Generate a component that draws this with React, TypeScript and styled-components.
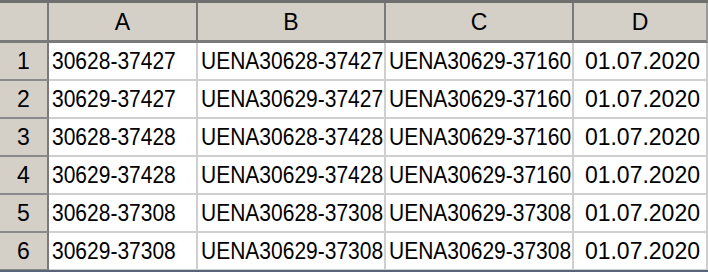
import React from "react";
import styled, { createGlobalStyle } from "styled-components";

const Global = createGlobalStyle`
  html, body { margin: 0; padding: 0; background: #ffffff; }
  body { width: 708px; height: 272px; overflow: hidden; }
`;

const Sheet = styled.div`
  width: 708px;
  height: 272px;
  box-sizing: border-box;
  border-top: 3px solid #6f6f6f;
  border-bottom: 2px solid #5a6478;
  display: grid;
  grid-template-columns: 49px 149px 188px 188px 134px;
  grid-template-rows: 40px repeat(6, 38px);
  font-family: "Liberation Sans", Arial, sans-serif;
  color: #000;
  overflow: hidden;
`;

const Corner = styled.div`
  background: #d4d0c8;
  border-right: 2px solid #7a7a7a;
  border-bottom: 3px solid #7a7a7a;
`;

const ColHead = styled.div<{ $last?: boolean }>`
  background: #d4d0c8;
  border-right: 2px solid ${(p) => (p.$last ? "#9a9a9a" : "#7a7a7a")};
  border-bottom: 3px solid #7a7a7a;
  display: flex;
  align-items: center;
  justify-content: center;
  font-size: 23px;
  padding-top: 2px;
`;

const RowHead = styled.div`
  background: #d4d0c8;
  border-right: 2px solid #7a7a7a;
  border-bottom: 2px solid #8a8a8a;
  display: flex;
  align-items: center;
  justify-content: center;
  font-size: 23px;
`;

const Cell = styled.div<{ $align: "left" | "right" }>`
  background: #ffffff;
  border-right: 2px solid #cfcfcf;
  border-bottom: 2px solid #cfcfcf;
  display: flex;
  align-items: center;
  justify-content: ${(p) => (p.$align === "right" ? "flex-end" : "flex-start")};
  padding: ${(p) => (p.$align === "right" ? "0 6px 0 0" : "0 0 0 3px")};
  font-size: ${(p) => (p.$align === "right" ? "23px" : "21px")};
  white-space: nowrap;
  overflow: hidden;
`;

const Text = styled.span<{ $tall?: boolean }>`
  display: inline-block;
  transform: ${(p) => (p.$tall ? "scaleY(1.12)" : "none")};
`;

const rows = [
  ["30628-37427", "UENA30628-37427", "UENA30629-37160", "01.07.2020"],
  ["30629-37427", "UENA30629-37427", "UENA30629-37160", "01.07.2020"],
  ["30628-37428", "UENA30628-37428", "UENA30629-37160", "01.07.2020"],
  ["30629-37428", "UENA30629-37428", "UENA30629-37160", "01.07.2020"],
  ["30628-37308", "UENA30628-37308", "UENA30629-37308", "01.07.2020"],
  ["30629-37308", "UENA30629-37308", "UENA30629-37308", "01.07.2020"],
];

export default function App() {
  return (
    <>
      <Global />
      <Sheet>
        <Corner />
        {["A", "B", "C", "D"].map((c, i) => (
          <ColHead key={c} $last={i === 3}>
            {c}
          </ColHead>
        ))}
        {rows.map((r, ri) => (
          <React.Fragment key={ri}>
            <RowHead>{ri + 1}</RowHead>
            {r.map((v, ci) => (
              <Cell key={ci} $align={ci === 3 ? "right" : "left"}>
                <Text $tall={ci !== 3}>{v}</Text>
              </Cell>
            ))}
          </React.Fragment>
        ))}
      </Sheet>
    </>
  );
}
